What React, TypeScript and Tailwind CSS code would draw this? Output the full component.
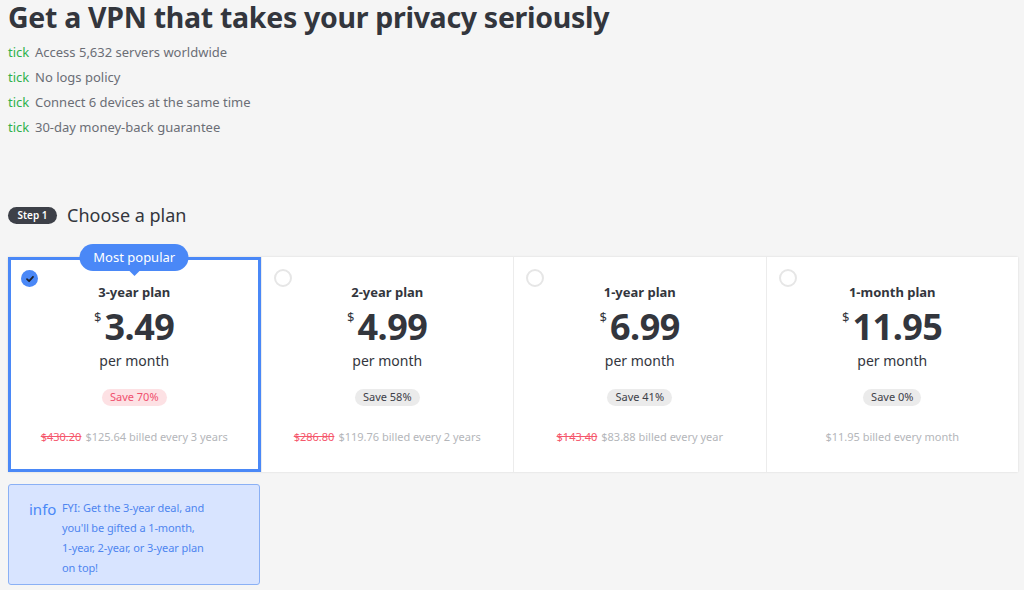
import React from "react";

const plans = [
  { name: "3-year plan", price: "3.49", save: "Save 70%", old: "$430.20", bill: "$125.64 billed every 3 years", selected: true },
  { name: "2-year plan", price: "4.99", save: "Save 58%", old: "$286.80", bill: "$119.76 billed every 2 years", selected: false },
  { name: "1-year plan", price: "6.99", save: "Save 41%", old: "$143.40", bill: "$83.88 billed every year", selected: false },
  { name: "1-month plan", price: "11.95", save: "Save 0%", old: "", bill: "$11.95 billed every month", selected: false },
];

const features = [
  "Access 5,632 servers worldwide",
  "No logs policy",
  "Connect 6 devices at the same time",
  "30-day money-back guarantee",
];

export default function App() {
  return (
    <div
      className="min-h-[590px] w-[1024px] bg-[#f5f5f5] px-2 text-[#33363d]"
      style={{ fontFamily: '"Noto Sans", "Open Sans", sans-serif' }}
    >
      <h1 className="pt-[1px] text-[28.5px] font-bold leading-[33px] tracking-[-0.3px] text-[#33363d]">
        Get a VPN that takes your privacy seriously
      </h1>
      <ul className="mt-[6px]">
        {features.map((f) => (
          <li key={f} className="flex items-baseline h-[25px] leading-[25px]">
            <span className="w-[27px] text-[13px] text-[#2fb24c]">tick</span>
            <span className="text-[13px] text-[#6b6e75]">{f}</span>
          </li>
        ))}
      </ul>

      <div className="mt-[64px] flex items-center gap-[10px]">
        <span className="flex h-[17px] w-[49px] items-center justify-center rounded-full bg-[#3d4048] text-[10px] font-semibold text-white">
          Step 1
        </span>
        <span className="text-[18px] leading-[22px] text-[#33363d]">Choose a plan</span>
      </div>

      <div className="mt-[31px] grid w-[1010px] grid-cols-4 bg-white shadow-[0_0_2px_rgba(0,0,0,0.12)]">
        {plans.map((p) => (
          <div
            key={p.name}
            className={
              p.selected
                ? "relative h-[215px] border-[3px] border-[#4a88f7] bg-white"
                : "relative h-[215px] border-l border-[#ececec] bg-white first:border-l-0"
            }
          >
            {p.selected && (
              <div className="absolute left-1/2 top-[-16px] -translate-x-1/2">
                <div className="flex h-[27px] w-[109px] items-center justify-center rounded-full bg-[#4a88f7] text-[13px] text-white">
                  Most popular
                </div>
                <div className="mx-auto h-0 w-0 border-x-[5px] border-t-[5px] border-x-transparent border-t-[#4a88f7]" />
              </div>
            )}
            <div
              className={
                p.selected
                  ? "absolute left-[10px] top-[10px] flex h-[17px] w-[17px] items-center justify-center rounded-full bg-[#4a88f7]"
                  : "absolute left-[12px] top-[12px] h-[18px] w-[18px] rounded-full border-2 border-[#e6e6e6]"
              }
            >
              {p.selected && (
                <svg width="10" height="10" viewBox="0 0 10 10">
                  <path d="M2 5.2 L4.1 7.2 L8 2.8" fill="none" stroke="#1e2330" strokeWidth="1.8" strokeLinecap="round" strokeLinejoin="round" />
                </svg>
              )}
            </div>
            <div className={p.selected ? "flex flex-col items-center pt-[23px]" : "flex flex-col items-center pt-[26px]"}>
              <div className="text-[13px] font-bold leading-[18px] text-[#33363d]">{p.name}</div>
              <div className="mt-[7px] flex items-start">
                <span className="mt-[3px] mr-[3px] text-[13px] leading-none text-[#33363d]">$</span>
                <span className="text-[36px] font-bold leading-[38px] tracking-[-0.5px] text-[#33363d]">{p.price}</span>
              </div>
              <div className="mt-[6px] text-[14px] leading-[18px] text-[#33363d]">per month</div>
              <div
                className={
                  p.selected
                    ? "mt-[19px] flex h-[17px] items-center rounded-full bg-[#fde1e4] px-[8px] text-[11px] text-[#f0506e]"
                    : "mt-[19px] flex h-[17px] items-center rounded-full bg-[#ebebeb] px-[8px] text-[11px] text-[#3d4048]"
                }
              >
                {p.save}
              </div>
              <div className="mt-[24px] text-[11px] leading-[14px] text-[#b4b6ba]">
                {p.old && <span className="mr-[4px] text-[#f5576c] line-through">{p.old}</span>}
                {p.bill}
              </div>
            </div>
          </div>
        ))}
      </div>

      <div className="mt-[12px] flex h-[101px] w-[252px] rounded-[3px] border border-[#8ab0f5] bg-[#d8e4ff] pl-[20px] pt-[15px]">
        <span className="w-[33px] text-[15px] leading-[18px] text-[#4a88f7]">info</span>
        <p className="-mt-[2px] whitespace-nowrap text-[11px] leading-[20px] tracking-[-0.1px] text-[#4f86f0]">
          FYI: Get the 3-year deal, and
          <br />
          you'll be gifted a 1-month,
          <br />
          1-year, 2-year, or 3-year plan
          <br />
          on top!
        </p>
      </div>
    </div>
  );
}
